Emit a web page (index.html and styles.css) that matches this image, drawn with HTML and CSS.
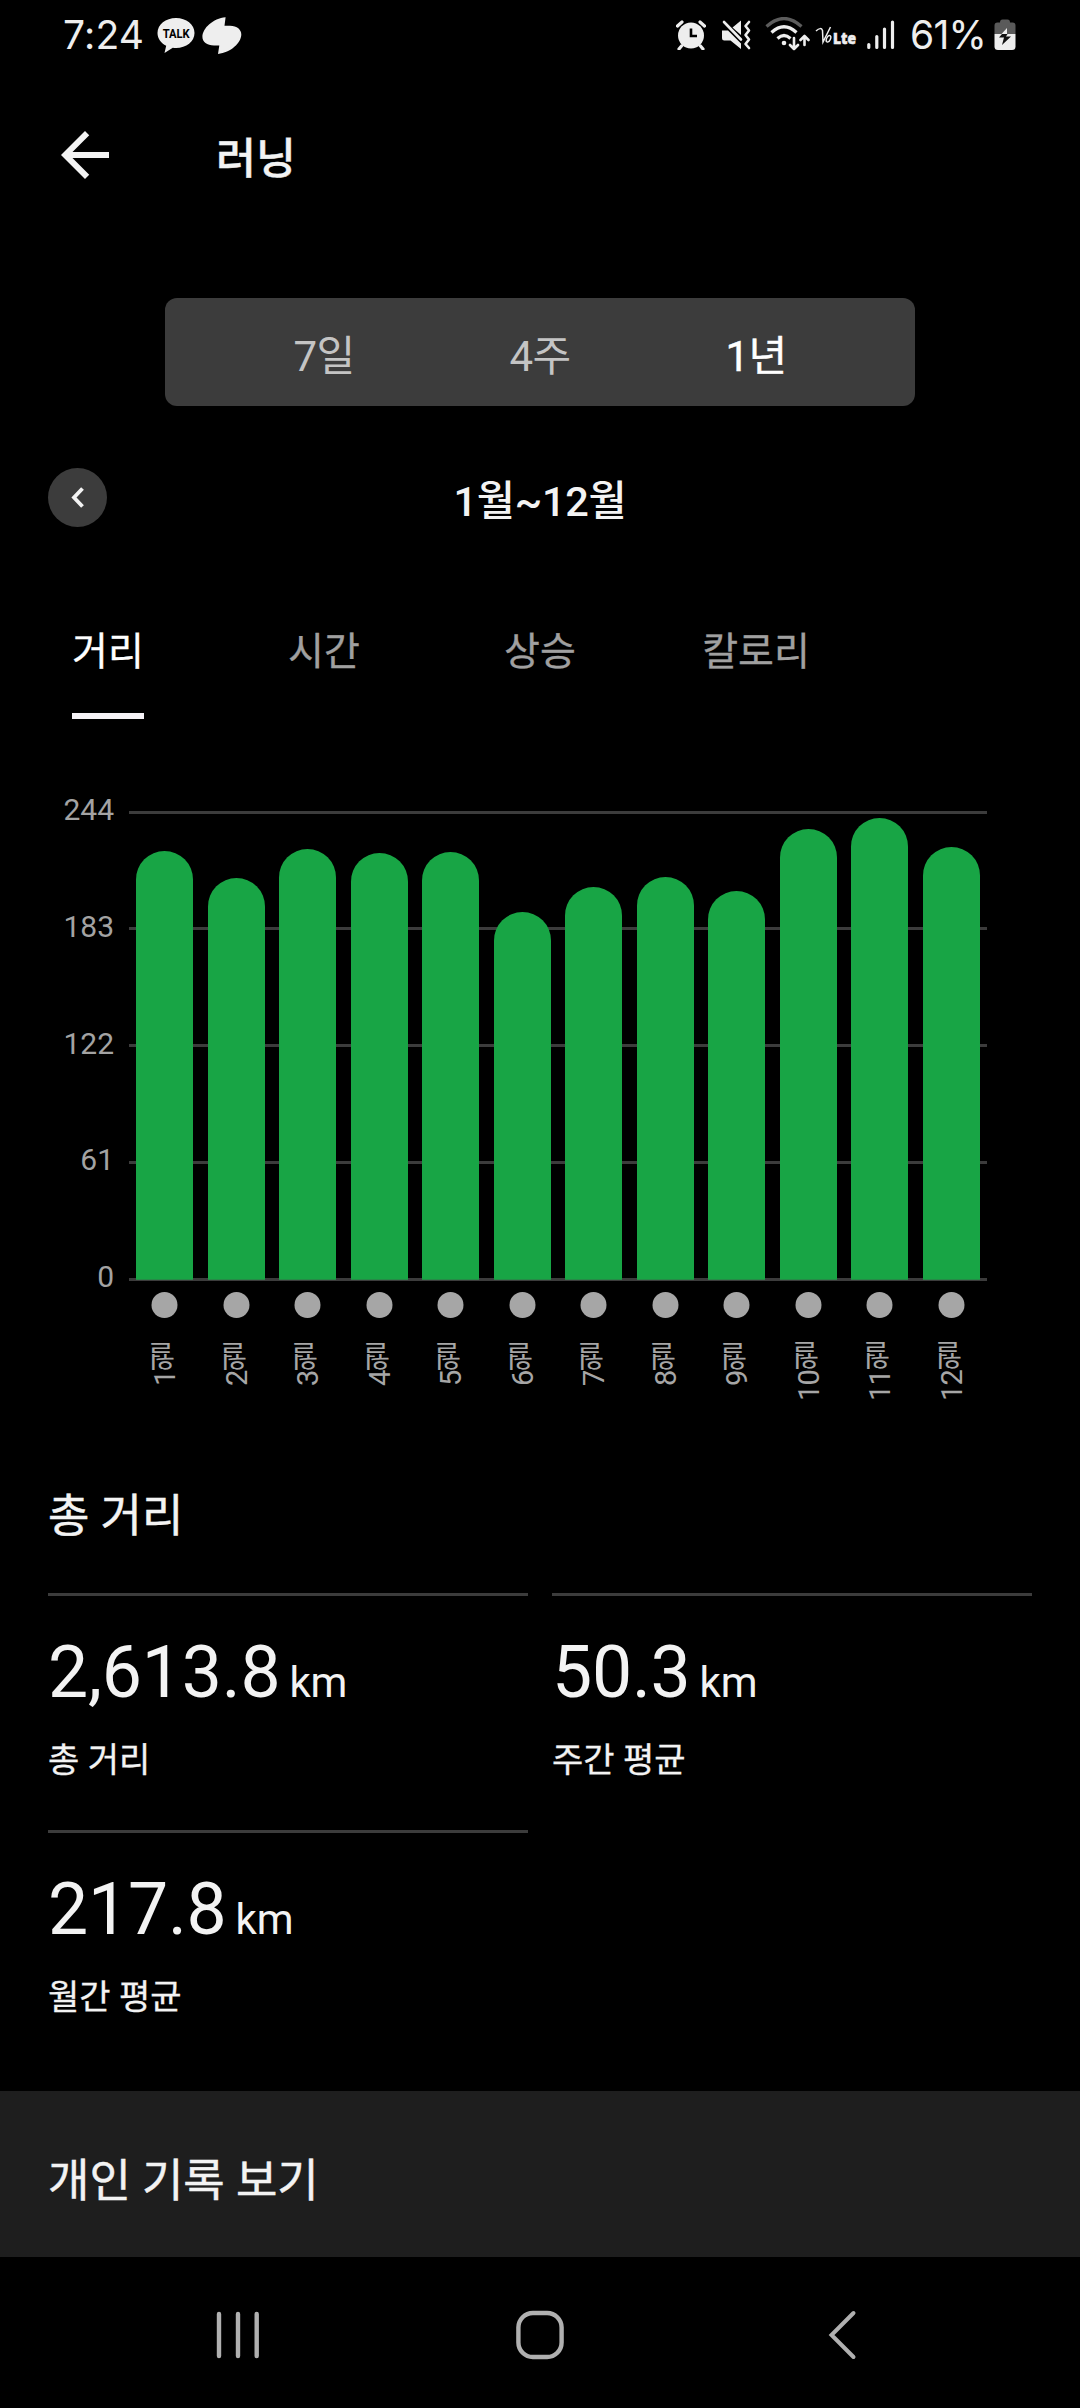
FILE: index.html
```html
<!DOCTYPE html>
<html lang="ko">
<head>
<meta charset="utf-8">
<title>러닝</title>
<link rel="stylesheet" href="styles.css">
</head>
<body>
<div class="status">
  <span class="clock">7:24</span>
  <svg class="talk" width="38" height="36" viewBox="0 0 38 36"><path fill="#eee" d="M19 0C8.700 0 .5 6.600 .5 15c0 5.400 3.500 10.200 8.700 12.800L7.500 35l8.300-5.300c1 .2 2.100.2 3.200.2 10.300 0 18.500-6.600 18.500-15S29.300 0 19 0z"/><text x="19.200" y="19.800" text-anchor="middle" textLength="27" lengthAdjust="spacingAndGlyphs" class="talk-text">TALK</text></svg>
  <svg class="swirl" width="40" height="38" viewBox="0 0 40 38"><path fill="#eee" d="M23.600.2 22.500 8.800h5.500C35 9 39.500 12.500 39.300 17.800 39 26 29 35.500 16 37l1.300-8.500H12C5 28.300.3 25 .4 19.800.600 11 11 1.500 23.600.2z"/></svg>
  <span class="spacer"></span>
  <svg class="alarm" width="30" height="30" viewBox="0 0 30 30"><circle cx="15" cy="15.500" r="13" fill="#eee"/><path d="m1.500 6 4.500-4M28.500 6 24 2M5.500 26l-2.500 3M24.500 26l2.500 3" fill="none" stroke="#eee" stroke-width="3.200" stroke-linecap="round"/><path d="M15 8.500v7.500h6" fill="none" stroke="#000" stroke-width="2.600"/></svg>
  <svg class="mute" width="31" height="30" viewBox="0 0 31 30"><path fill="#eee" d="M1 10.500h6L20 23.500v5.500L9.500 20.500H3.200Q1 20.500 1 18.300zM11.500 7.500 20 .5V15z"/><path d="m3 2 17 17.500" stroke="#eee" stroke-width="2.600" stroke-linecap="round"/><path d="m28 2-3.500 4 3.500 4.500-3.500 4.500 3.500 4.500-3.500 4.500 3.500 4" fill="none" stroke="#eee" stroke-width="2.600" stroke-linecap="round" stroke-linejoin="round"/></svg>
  <svg class="wifi" width="45" height="36" viewBox="0 0 45 36"><g fill="none" stroke-width="3.200"><path stroke="#5c5c5c" d="M1.500 9.500q17.500-16 35 0"/><path stroke="#eee" d="M6.500 15.500q12.500-11.500 25 0M12.500 21.500q6.500-6 13 0"/></g><circle cx="19" cy="26" r="2.300" fill="#eee"/><path fill="none" stroke="#eee" stroke-width="2.600" stroke-linecap="round" stroke-linejoin="round" d="M29 21v11m-4-4 4 4 4-4M39.500 28V19m-4 4 4-4 4 4"/></svg>
  <svg class="volte" width="43" height="26" viewBox="0 0 43 26"><path fill="none" stroke="#eee" stroke-width="1.500" d="M1 5Q6 .5 7.500 4.500L8 16 15.500 1"/><ellipse cx="13.500" cy="12.800" rx="1.900" ry="3.500" transform="rotate(25 13.500 12.800)" fill="none" stroke="#eee" stroke-width="1.400"/><text x="18" y="18" textLength="23" lengthAdjust="spacingAndGlyphs" class="lte">Lte</text></svg>
  <svg class="signal" width="28" height="30" viewBox="0 0 28 30"><path stroke="#eee" stroke-width="3.200" stroke-linecap="round" d="M1.800 24.500v3M9.800 16.500v11M17.500 9v18.500M25.500 2v25.500"/></svg>
  <span class="percent">61%</span>
  <svg class="battery" width="22" height="32" viewBox="0 0 22 32"><path fill="#5a5a5a" d="M6 3.500Q6 .5 8.500.5h5Q16 .5 16 3.500h2.500Q21.500 3.500 21.500 6.500V15H.5V6.500Q.5 3.500 3.500 3.500z"/><path fill="#eee" d="M.5 15h21v12.500q0 3.500-3.500 3.500H4Q.5 31 .5 27.500z"/><path fill="#eee" d="M13 9v6H7.500z"/><path fill="#111" d="M8 15 5 18.500h5L8 26 17 17.500H12l1.500-2.500z"/></svg>
</div>

<header class="appbar">
  <svg width="72" height="72" viewBox="0 0 24 24"><path fill="#f3f3f3" d="M20 11H7.830l5.590-5.590L12 4l-8 8 8 8 1.410-1.410L7.830 13H20v-2z"/></svg>
  <h1>러닝</h1>
</header>

<div class="segment"><span>7일</span><span>4주</span><span class="on">1년</span></div>

<div class="period">
  <span class="prev"><svg width="59" height="59" viewBox="0 0 59 59"><path d="M34.500 20.500 26 29.500l8.500 9" fill="none" stroke="#f3f3f3" stroke-width="3.800"/></svg></span>
  <strong>1월~12월</strong>
</div>

<nav class="tabs">
  <span class="tab on">거리</span><span class="tab">시간</span><span class="tab">상승</span><span class="tab">칼로리</span>
</nav>

<section class="chart">
  <div class="axis"><span>244</span><span>183</span><span>122</span><span>61</span><span>0</span></div>
  <div class="lines"><i></i><i></i><i></i><i></i><i></i></div>
  <div class="bars">
    <i style="height:429px"></i><i style="height:402px"></i><i style="height:431px"></i><i style="height:427px"></i><i style="height:428px"></i><i style="height:368px"></i><i style="height:393px"></i><i style="height:403px"></i><i style="height:389px"></i><i style="height:451px"></i><i style="height:462px"></i><i style="height:433px"></i>
  </div>
  <div class="months">
    <span>1월</span><span>2월</span><span>3월</span><span>4월</span><span>5월</span><span>6월</span><span>7월</span><span>8월</span><span>9월</span><span>10월</span><span>11월</span><span>12월</span>
  </div>
</section>

<section class="summary">
  <h2>총 거리</h2>
  <div class="stats">
    <div class="stat"><p class="value">2,613.8<small>km</small></p><p class="label">총 거리</p></div>
    <div class="stat"><p class="value">50.3<small>km</small></p><p class="label">주간 평균</p></div>
    <div class="stat"><p class="value">217.8<small>km</small></p><p class="label">월간 평균</p></div>
  </div>
</section>

<div class="records">개인 기록 보기</div>

<footer class="navbar">
  <svg width="48" height="52" viewBox="0 0 48 52"><path d="M5 5v42M24 5v42M42.700 5v42" stroke="#b0b0b0" stroke-width="4.400" stroke-linecap="round"/></svg>
  <svg width="48" height="52" viewBox="0 0 48 52"><rect x="2.400" y="4" width="43.200" height="44" rx="14.500" fill="none" stroke="#b0b0b0" stroke-width="4.400"/></svg>
  <svg width="48" height="52" viewBox="0 0 48 52"><path d="M35.500 4 13.500 26l22 22" fill="none" stroke="#b0b0b0" stroke-width="4" stroke-linecap="round"/></svg>
</footer>
</body>
</html>
```
FILE: styles.css
```css
* { box-sizing: border-box; margin: 0; padding: 0; }
body {
  width: 1080px;
  height: 2408px;
  background: #000;
  color: #f3f3f3;
  font-family: Roboto, "Noto Sans CJK KR", sans-serif;
  overflow: hidden;
}
svg { display: block; flex: none; }

.status {
  display: flex;
  align-items: flex-start;
  height: 70px;
  padding-left: 63px;
  color: #eee;
  font-family: Inter, Roboto, sans-serif;
}
.clock, .percent { font-size: 39px; line-height: 70px; white-space: nowrap; }
.clock { width: 94px; letter-spacing: 0.2px; }
.percent { width: 84px; margin-left: 15px; letter-spacing: -0.8px; }
.spacer { flex: 1; }
.talk { margin-top: 18px; }
.talk-text { font: 700 12.500px Roboto, sans-serif; fill: #000; }
.swirl { margin: 17px 0 0 7px; }
.alarm { margin-top: 20px; }
.mute { margin: 20px 0 0 15px; }
.wifi { margin: 17px 0 0 13px; }
.volte { margin: 26px 0 0 5px; overflow: visible; }
.lte { font: 800 16px "Open Sans", sans-serif; fill: #eee; stroke: #eee; stroke-width: 0.6px; }
.signal { margin: 20px 0 0 9px; }
.battery { margin: 19px 64px 0 0; }

.appbar { display: flex; align-items: center; height: 169px; padding-left: 49px; gap: 95px; }
.appbar h1 { padding-top: 11px; font-size: 43.500px; line-height: 60px; font-weight: 500; -webkit-text-stroke: 0.4px currentColor; }

.segment {
  display: flex;
  width: 750px;
  height: 108px;
  margin: 59px auto 0;
  padding: 5px 51px 0;
  border-radius: 12px;
  background: #3c3c3c;
  color: #c4c4c4;
  font-size: 42px;
  line-height: 108px;
  letter-spacing: -0.5px;
  text-align: center;
}
.segment span { flex: 1; }
.segment .on { color: #fff; -webkit-text-stroke: 0.4px currentColor; }

.period {
  display: grid;
  grid-template-columns: 59px 1fr 59px;
  height: 60px;
  margin-top: 62px;
  padding: 0 48px;
  font-size: 41.500px;
  line-height: 68px;
  letter-spacing: -0.3px;
  text-align: center;
}
.period strong { font-weight: 500; }
.prev { width: 59px; height: 59px; border-radius: 50%; background: #3c3c3c; }

.tabs { display: flex; width: 864px; height: 98px; margin-top: 93px; font-size: 39px; line-height: 62px; }
.tab { flex: 1; display: flex; flex-direction: column; align-items: center; color: #a0a0a0; }
.tab.on { color: #fff; }
.tab.on::after { content: ""; width: 72px; height: 6px; margin-top: 30px; background: #f6f3f7; }
.tab, .label { -webkit-text-stroke: 0.3px currentColor; }

.chart {
  display: grid;
  grid-template-columns: 129px 858px;
  grid-template-rows: 469.500px auto;
  margin-top: 91.500px;
}
.axis {
  grid-area: 1 / 1;
  display: flex;
  flex-direction: column;
  justify-content: space-between;
  height: 497px;
  margin-top: -15.500px;
  padding-right: 15px;
  color: #a3a3a3;
  font-size: 30px;
  line-height: 30px;
  text-align: right;
}
.lines { grid-area: 1 / 2; display: flex; flex-direction: column; justify-content: space-between; height: 470px; }
.lines i { height: 3px; background: #3c3c3c; }
.bars { grid-area: 1 / 2; display: grid; grid-template-columns: repeat(12, 71.500px); justify-items: center; align-items: end; }
.bars i { width: 57px; border-radius: 28.500px 28.500px 0 0; border-bottom: 1px solid #268a47; background: #18a545; }
.months { grid-area: 2 / 2; display: grid; grid-template-columns: repeat(12, 71.500px); height: 180px; padding-top: 12px; }
.months span {
  display: flex;
  align-items: center;
  justify-content: flex-end;
  height: 120px;
  writing-mode: vertical-rl;
  transform: rotate(180deg);
  color: #a6a6a6;
  font-size: 29px;
  line-height: 36px;
  letter-spacing: -0.8px;
  white-space: nowrap;
}
.months span::after {
  content: "";
  width: 26px;
  height: 26px;
  margin-top: 24px;
  border-radius: 50%;
  background: #a6a6a6;
}

.summary { height: 631px; padding: 27px 48px 0; }
.summary h2 { font-size: 45px; line-height: 60px; font-weight: 400; }
.summary h2, .records { -webkit-text-stroke: 0.5px currentColor; }
.stats { display: grid; grid-template-columns: 480px 480px; grid-auto-rows: 237px; column-gap: 24px; margin-top: 46px; }
.stat { border-top: 3px solid #3c3c3c; }
.value { padding-top: 37px; font-size: 71.500px; line-height: 80px; letter-spacing: -0.2px; }
.value small { margin-left: 9px; font-size: 42px; }
.label { margin-top: 15px; font-size: 34px; line-height: 44px; }

.records { height: 166px; padding: 8px 48px 0; background: #1e1e1e; font-size: 45px; line-height: 166px; }

.navbar { display: flex; justify-content: space-between; height: 151px; padding: 52px 214px 0; }
```
